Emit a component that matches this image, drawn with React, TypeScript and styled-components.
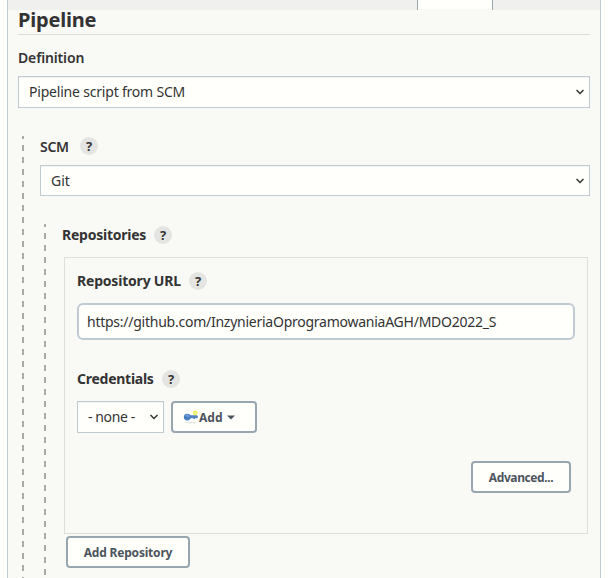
import React from "react";
import styled, { createGlobalStyle } from "styled-components";

const GlobalStyle = createGlobalStyle`
  *, *::before, *::after { box-sizing: border-box; }
  body {
    margin: 0;
    background: #fffffc;
    color: #333333;
    font-family: "Noto Sans", "Open Sans", sans-serif;
    font-size: 14px;
    overflow: hidden;
  }
`;

const Panel = styled.main`
  width: 594px;
  height: 578px;
  margin-left: 7px;
  border: solid #bfcad1;
  border-width: 0 1px;
  background: #f9faf6;
  overflow: hidden;
`;

const TabStrip = styled.nav`
  display: flex;
  height: 10px;
  padding-left: 409px;
  background: #f0f0ef;
`;

const ActiveTab = styled.span`
  width: 76px;
  height: 10px;
  border: solid #98a6ac;
  border-width: 0 1px;
  background: linear-gradient(#fffffc 9px, #f9faf6 9px);
`;

const Section = styled.section`
  display: flex;
  flex-direction: column;
  padding: 0 10px;
`;

const Heading = styled.h1`
  margin: 0 0 13px;
  padding-bottom: 5px;
  border-bottom: 1px solid #dcdfdc;
  font-size: 20px;
  font-weight: 700;
  line-height: 19px;
  letter-spacing: -0.2px;
`;

const LabelRow = styled.div<{ $gap: number; $width?: number }>`
  display: flex;
  align-items: center;
  justify-content: space-between;
  width: ${(p) => (p.$width ? `${p.$width}px` : "auto")};
  height: 18px;
  margin-bottom: ${(p) => p.$gap}px;
`;

const Label = styled.label<{ $medium?: boolean; $tracking?: number }>`
  padding-bottom: ${(p) => (p.$medium ? 0 : 2)}px;
  font-weight: ${(p) => (p.$medium ? 600 : 700)};
  letter-spacing: ${(p) => p.$tracking ?? 0}px;
  line-height: 19px;
  white-space: nowrap;
`;

const HelpBadge = styled.span`
  display: flex;
  align-items: center;
  justify-content: center;
  width: 18px;
  height: 18px;
  border-radius: 50%;
  background: #e4e4e2;
  font-size: 13px;
  font-weight: 700;
  line-height: 18px;
`;

const SelectBox = styled.div<{ $compact?: boolean; $width?: number; $tracking?: number }>`
  display: flex;
  align-items: center;
  justify-content: space-between;
  flex: none;
  width: ${(p) => (p.$width ? `${p.$width}px` : "auto")};
  height: ${(p) => (p.$compact ? 31 : 32)}px;
  padding: 0 5px ${(p) => (p.$compact ? 0 : 1)}px 10px;
  border: 1px solid #bfcad1;
  background: #fffffc;
  box-shadow: inset 0 1px 1px rgba(0, 0, 0, 0.05);
  letter-spacing: ${(p) => p.$tracking ?? 0}px;
  white-space: nowrap;
`;

const Nested = styled.div<{ $top: number }>`
  margin: 28px 0 0 4px;
  padding: ${(p) => p.$top}px 0 10px 18px;
  background: repeating-linear-gradient(
      #a9a9a8 0 3px,
      transparent 3px 9px,
      #a9a9a8 9px 12px
    )
    left top / 2px 100% no-repeat;
`;

const RepositoryCard = styled.div`
  display: flex;
  flex-direction: column;
  height: 277px;
  margin: 0 2px;
  padding: 14px 12px 40px;
  border: 1px solid #dcdfdc;
`;

const UrlInput = styled.input`
  width: 100%;
  height: 37px;
  margin-bottom: 30px;
  padding: 0 8px 1px;
  border: 2px solid #bfcad3;
  border-radius: 6px;
  outline: 0;
  background: #fffffc;
  color: #333333;
  font: inherit;
  letter-spacing: -0.25px;
`;

const CredentialControls = styled.div`
  display: flex;
  gap: 7px;
`;

const Button = styled.button<{ $width: number; $tracking?: number }>`
  display: flex;
  align-items: center;
  justify-content: center;
  flex: none;
  width: ${(p) => p.$width}px;
  height: 32px;
  padding: 0;
  border: 2px solid #98a6b0;
  border-radius: 4px;
  background: #fffffc;
  color: #4d545d;
  font: 700 12px "Noto Sans", "Open Sans", sans-serif;
  letter-spacing: ${(p) => p.$tracking ?? 0}px;
`;

const AddButton = styled(Button)`
  justify-content: flex-start;
  padding-left: 10px;

  svg:last-child { margin-left: 5px; }
`;

const AdvancedButton = styled(Button)`
  align-self: flex-end;
  margin: 28px 4px 0 0;
`;

const AddRepositoryButton = styled(Button)`
  margin: 2px 0 0 4px;
`;

const Chevron = () => (
  <svg width="8" height="6" viewBox="0 0 8 6" fill="none">
    <path d="M0.5 1 L4 4.5 L7.5 1" stroke="#333" strokeWidth="1.5" />
  </svg>
);

const Caret = () => (
  <svg width="8" height="5" viewBox="0 0 8 5">
    <path d="M0 0.5H8L4 4.5Z" fill="#4d545d" />
  </svg>
);

const KeyIcon = () => (
  <svg width="16" height="16" viewBox="0 0 16 16">
    <ellipse cx="8" cy="13.7" rx="6" ry="0.7" fill="#e6e8e5" />
    <path d="M6 6.3H14L14.8 7.4V8.6L14 9.2H6Z" fill="#4f83c0" />
    <path d="M10.5 9H12V10H10.5Z" fill="#4f83c0" />
    <ellipse cx="4.3" cy="8.1" rx="3.5" ry="3.4" fill="#4b82c4" />
    <ellipse cx="4.2" cy="6.8" rx="2.2" ry="1.2" fill="#6b9bd3" />
    <circle cx="2.8" cy="8.3" r="0.7" fill="#3a69a5" />
    <circle cx="12.2" cy="3.8" r="1.7" fill="#f8f8b8" stroke="#e9ee50" strokeWidth="1.3" />
  </svg>
);

type FieldLabelProps = {
  text: string;
  width: number;
  gap: number;
  medium?: boolean;
  tracking?: number;
};

const FieldLabel = ({ text, width, gap, medium, tracking }: FieldLabelProps) => (
  <LabelRow $gap={gap} $width={width}>
    <Label $medium={medium} $tracking={tracking}>{text}</Label>
    <HelpBadge>?</HelpBadge>
  </LabelRow>
);

export default function App() {
  return (
    <>
      <GlobalStyle />
      <Panel>
        <TabStrip>
          <ActiveTab />
        </TabStrip>
        <Section>
          <Heading>Pipeline</Heading>
          <LabelRow $gap={10}>
            <Label $medium $tracking={-0.15}>Definition</Label>
          </LabelRow>
          <SelectBox $tracking={-0.2}>
            Pipeline script from SCM
            <Chevron />
          </SelectBox>
          <Nested $top={1}>
            <FieldLabel text="SCM" width={58} gap={10} medium tracking={-0.3} />
            <SelectBox $compact>
              Git
              <Chevron />
            </SelectBox>
            <Nested $top={2}>
              <FieldLabel text="Repositories" width={110} gap={13} tracking={-0.24} />
              <RepositoryCard>
                <FieldLabel text="Repository URL" width={130} gap={13} tracking={-0.2} />
                <UrlInput
                  readOnly
                  value="https://github.com/InzynieriaOprogramowaniaAGH/MDO2022_S"
                />
                <FieldLabel text="Credentials" width={103} gap={13} tracking={-0.26} />
                <CredentialControls>
                  <SelectBox $width={87} $tracking={-0.4}>
                    - none -
                    <Chevron />
                  </SelectBox>
                  <AddButton $width={86}>
                    <KeyIcon />
                    Add
                    <Caret />
                  </AddButton>
                </CredentialControls>
                <AdvancedButton $width={100} $tracking={-0.4}>Advanced...</AdvancedButton>
              </RepositoryCard>
              <AddRepositoryButton $width={124} $tracking={-0.2}>Add Repository</AddRepositoryButton>
            </Nested>
          </Nested>
        </Section>
      </Panel>
    </>
  );
}
